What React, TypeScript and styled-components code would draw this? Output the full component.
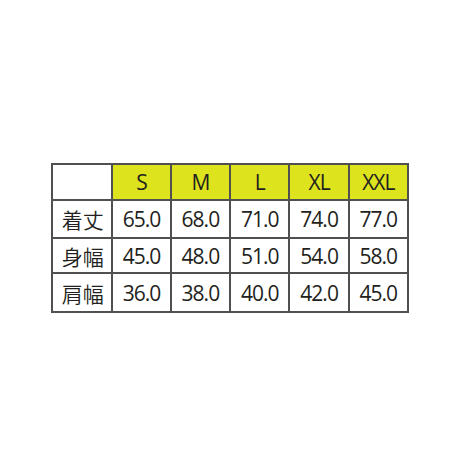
import React from "react";
import styled, { createGlobalStyle } from "styled-components";

const Global = createGlobalStyle`
  html, body { margin: 0; padding: 0; background: #ffffff; }
  #root { width: 460px; height: 460px; }
`;

const Page = styled.div`
  width: 460px;
  height: 460px;
  box-sizing: border-box;
  padding-top: 163px;
  display: flex;
  justify-content: center;
  align-items: flex-start;
  background: #ffffff;
`;

const Grid = styled.div`
  display: grid;
  grid-template-columns: 60px 58.6px 59.2px 59.5px 59.3px 59px;
  grid-template-rows: 35.5px 38.5px 35.2px 39.3px;
  border-top: 2px solid #505050;
  border-left: 2px solid #505050;
  font-family: "Open Sans", "Noto Sans CJK JP", sans-serif;
  color: #231f20;
`;

const Cell = styled.div<{ $head?: boolean; $blank?: boolean }>`
  box-sizing: border-box;
  border-right: 2px solid #505050;
  border-bottom: 2px solid #505050;
  background: ${(p) => (p.$head ? "#dde31c" : "#ffffff")};
  display: flex;
  align-items: center;
  justify-content: center;
  font-size: 21px;
  font-weight: 400;
  letter-spacing: -1px;
  padding-top: 1px;
`;

const Label = styled(Cell)`
  font-family: "Noto Sans CJK JP", sans-serif;
  font-size: 21px;
  font-weight: 350;
  letter-spacing: 0;
  padding-left: 1px;
`;

const sizes = ["S", "M", "L", "XL", "XXL"];
const rows: [string, string[]][] = [
  ["着丈", ["65.0", "68.0", "71.0", "74.0", "77.0"]],
  ["身幅", ["45.0", "48.0", "51.0", "54.0", "58.0"]],
  ["肩幅", ["36.0", "38.0", "40.0", "42.0", "45.0"]],
];

export default function App() {
  return (
    <>
      <Global />
      <Page>
        <Grid>
          <Cell $blank />
          {sizes.map((s) => (
            <Cell key={s} $head>
              {s}
            </Cell>
          ))}
          {rows.map(([label, vals]) => (
            <React.Fragment key={label}>
              <Label>{label}</Label>
              {vals.map((v, i) => (
                <Cell key={i}>{v}</Cell>
              ))}
            </React.Fragment>
          ))}
        </Grid>
      </Page>
    </>
  );
}
